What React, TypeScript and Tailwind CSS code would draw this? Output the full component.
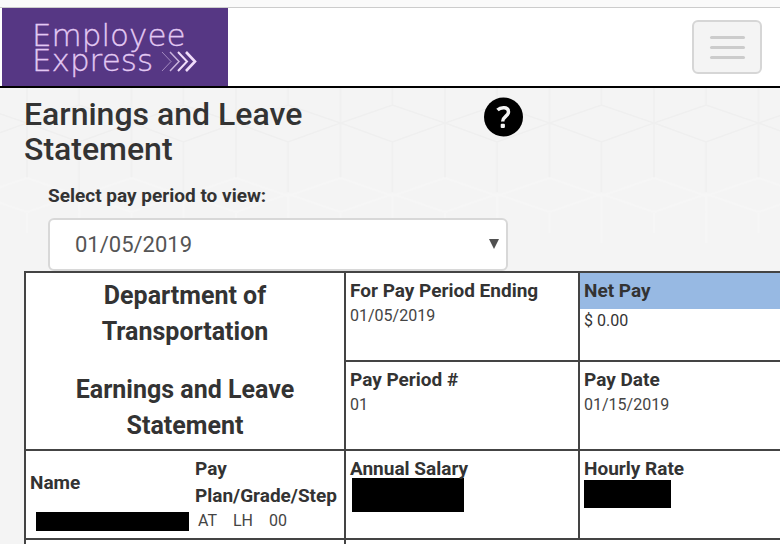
import React from "react";

function Logo() {
  return (
    <a
      href="#home"
      aria-label="Employee Express"
      className="ml-0.5 block h-[78px] w-[226px] shrink-0 bg-[#563784]"
    >
      <svg viewBox="0 0 226 78" className="h-full w-full" fill="none">
        <text
          fill="#e3c9f3"
          stroke="#e3c9f3"
          strokeWidth="0.3"
          fontFamily="'DejaVu Sans Light', 'DejaVu Sans', sans-serif"
          fontWeight="200"
          fontSize="31"
        >
          <tspan x="30" y="38">Employee</tspan>
          <tspan x="30" y="63">Express</tspan>
        </text>
        <g stroke="#f0dcfa" strokeLinejoin="miter">
          <path d="M160 44l9 9.500-9 9.500" strokeWidth="1" opacity="0.5" />
          <path d="M168 44l9 9.500-9 9.500" strokeWidth="1.5" opacity="0.75" />
          <path d="M176 44l9 9.500-9 9.500" strokeWidth="2" />
          <path d="M184 44l9 9.500-9 9.500" strokeWidth="2.600" />
        </g>
      </svg>
    </a>
  );
}

function Backdrop() {
  return (
    <svg aria-hidden="true" className="absolute inset-0 -z-10 h-full w-full" fill="none">
      <defs>
        <pattern id="lattice" x="27" y="0" width="104.5" height="160" patternUnits="userSpaceOnUse">
          <path
            d="M0 35L52 17L104.5 35L52 54ZM52 0V17M52 54V104M0 0V90M104.5 0V90"
            stroke="#efefef"
            strokeWidth="1.5"
          />
          <path
            d="M0 90L52 108L104.5 90M0 124L52 106L104.5 124M52 108V155M0 124V145M104.5 124V145"
            stroke="#f6f6f6"
            strokeWidth="2"
          />
        </pattern>
      </defs>
      <rect width="100%" height="160" fill="url(#lattice)" />
    </svg>
  );
}

function Field({ label, children }: { label: string; children: React.ReactNode }) {
  return (
    <td className="h-[89px] border-2 border-[#444] px-1 pt-[5px] align-top">
      <div className="text-[19px] leading-[26px] font-bold">{label}</div>
      {children}
    </td>
  );
}

const value = "text-base leading-6 text-[#444]";

export default function App() {
  return (
    <div className="min-h-screen overflow-x-hidden bg-[#f4f4f4] font-['Roboto','Liberation_Sans',sans-serif] text-[#333]">
      <header className="border-b-2 border-black bg-[#fafafa] pt-[7px]">
        <div className="flex items-start justify-between border-t border-[#ccc] bg-white">
          <Logo />
          <button
            type="button"
            aria-label="Toggle navigation"
            className="mt-3 mr-[18px] flex h-[54px] w-[70px] flex-col items-center justify-center gap-[7px] rounded-md border-2 border-[#d6d6d6] bg-[#f4f4f4]"
          >
            <span className="h-[3px] w-[35px] rounded-sm bg-[#ccc]" />
            <span className="h-[3px] w-[35px] rounded-sm bg-[#ccc]" />
            <span className="h-[3px] w-[35px] rounded-sm bg-[#ccc]" />
          </button>
        </div>
      </header>

      <main className="relative isolate pl-6">
        <Backdrop />
        <div className="flex items-start pt-[9px]">
          <h1 className="w-[460px] pr-40 text-[32px] leading-[35px] font-medium">
            Earnings and Leave Statement
          </h1>
          <button type="button" aria-label="Help" className="h-10 w-10">
            <svg viewBox="0 0 40 40" className="h-10 w-10" fill="none">
              <circle cx="19.5" cy="20" r="19.5" fill="#000" />
              <path
                d="M13.500 13C16.500 10.100 24.500 9.300 24.500 15C24.500 19.200 19 19.200 18.700 24.500"
                stroke="#f4f4f4"
                strokeWidth="3.500"
              />
              <rect x="16.7" y="26.8" width="4.200" height="4.200" rx="1" fill="#f4f4f4" />
            </svg>
          </button>
        </div>

        <form className="pt-[17px] pl-6">
          <label htmlFor="period" className="block text-[19px] leading-6 font-bold">
            Select pay period to view:
          </label>
          <div className="relative mt-2.5 h-[53px] w-[460px]">
            <select
              id="period"
              className="h-full w-full appearance-none rounded-md border-2 border-[#d8d8d8] bg-white pl-[25px] text-[22px] text-[#555]"
            >
              <option>01/05/2019</option>
            </select>
            <svg
              viewBox="0 0 10 10"
              className="pointer-events-none absolute top-[21px] right-[9px] h-2.5 w-2.5"
            >
              <path d="M0 0h10L5 10z" fill="#505050" />
            </svg>
          </div>
        </form>

        <table className="w-full table-fixed border-collapse bg-white">
          <colgroup>
            <col className="w-[320px]" />
            <col className="w-[234px]" />
            <col />
          </colgroup>
          <tbody className="[&_td:last-child:not(:nth-child(1))]:border-r-0">
            <tr>
              <td
                rowSpan={2}
                className="border-2 border-[#444] px-10 text-center text-[25px] leading-9 font-bold"
              >
                <div>Department of Transportation</div>
                <div className="mt-[22px]">Earnings and Leave Statement</div>
              </td>
              <Field label="For Pay Period Ending">
                <div className={value}>01/05/2019</div>
              </Field>
              <td className="h-[89px] border-2 border-[#444] align-top">
                <div className="bg-[#97b9e3] px-1 py-[5px] text-[19px] leading-[26px] font-bold">
                  Net Pay
                </div>
                <div className="px-1 text-base leading-6">$ 0.00</div>
              </td>
            </tr>
            <tr>
              <Field label="Pay Period #">
                <div className={value}>01</div>
              </Field>
              <Field label="Pay Date">
                <div className={value}>01/15/2019</div>
              </Field>
            </tr>
            <tr>
              <td className="h-[88px] border-2 border-[#444] px-1 pt-1 align-top">
                <div className="grid grid-cols-[165px_auto] items-center text-[19px] leading-[27px] font-bold">
                  <div>Name</div>
                  <div>Pay Plan/Grade/Step</div>
                </div>
                <div className="grid grid-cols-[168px_auto] items-center">
                  <div className="ml-1.5 h-[19px] w-[153px] bg-black" />
                  <div className="flex gap-4 text-base leading-6 text-[#444]">
                    <span>AT</span>
                    <span>LH</span>
                    <span>00</span>
                  </div>
                </div>
              </td>
              <Field label="Annual Salary">
                <div className="-mt-1 ml-0.5 h-[34px] w-28 bg-black" />
              </Field>
              <Field label="Hourly Rate">
                <div className="-mt-0.5 h-7 w-[87px] bg-black" />
              </Field>
            </tr>
            <tr>
              <td className="h-6 border-2 border-[#444]" />
              <td colSpan={2} className="h-6 border-2 border-[#444]" />
            </tr>
          </tbody>
        </table>
      </main>
    </div>
  );
}
